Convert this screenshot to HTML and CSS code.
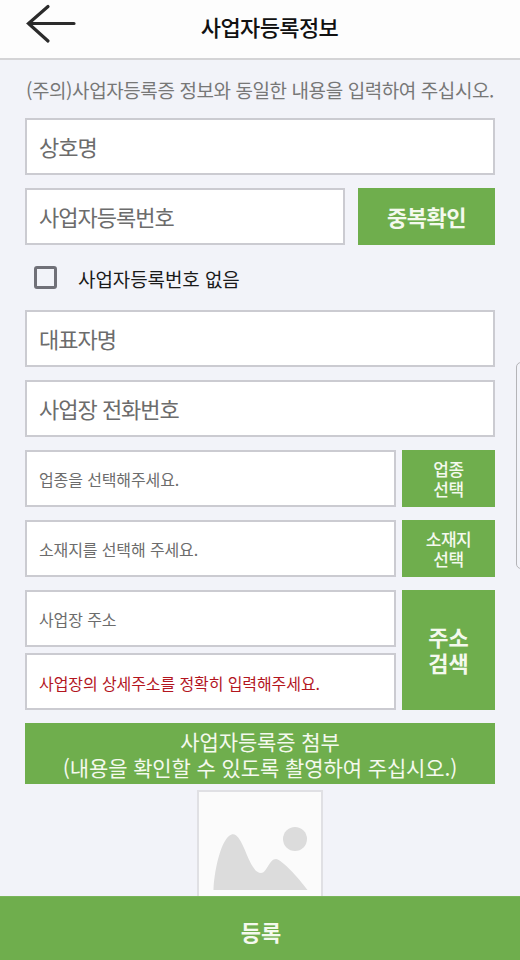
FILE: index.html
```html
<!DOCTYPE html>
<html lang="ko">
<head>
<meta charset="utf-8">
<title>사업자등록정보</title>
<link rel="stylesheet" href="styles.css">
</head>
<body>
<div class="page">
  <header class="header">
    <svg class="back" width="52" height="46" viewBox="0 0 52 46" aria-hidden="true"><path d="M49 23.500H3.500M23 6.500L3.500 23.500L23 41" fill="none" stroke="#2b2b2b" stroke-width="3.200" stroke-linecap="round" stroke-linejoin="miter"/></svg>
    <h1 class="title">사업자등록정보</h1>
  </header>
  <main class="form">
    <p class="notice">(주의)사업자등록증 정보와 동일한 내용을 입력하여 주십시오.</p>
    <div class="field large">상호명</div>
    <div class="row gap13">
      <div class="field large grow">사업자등록번호</div>
      <div class="btn dup">중복확인</div>
    </div>
    <label class="check"><span class="box"></span><span class="check-text">사업자등록번호 없음</span></label>
    <div class="field large">대표자명</div>
    <div class="field large">사업장 전화번호</div>
    <div class="row">
      <div class="field small grow">업종을 선택해주세요.</div>
      <div class="btn pick">업종<br>선택</div>
    </div>
    <div class="row">
      <div class="field small grow">소재지를 선택해 주세요.</div>
      <div class="btn pick">소재지<br>선택</div>
    </div>
    <div class="row addr">
      <div class="addr-fields">
        <div class="field small">사업장 주소</div>
        <div class="field small red">사업장의 상세주소를 정확히 입력해주세요.</div>
      </div>
      <div class="btn search">주소<br>검색</div>
    </div>
    <div class="banner">사업자등록증 첨부<br>(내용을 확인할 수 있도록 촬영하여 주십시오.)</div>
    <div class="photo">
      <svg width="100" height="78" viewBox="0 0 100 78" aria-hidden="true">
        <circle cx="85" cy="18" r="12" fill="#dcdcdc"/>
        <path d="M3.500 69C4 52 10 22 19 15C25 10 29 16 34 27C39 39 44 52 51 52C57 52 59 38 66 38C72 39 88 56 97.500 69Z" fill="#dcdcdc"/>
      </svg>
    </div>
  </main>
  <div class="scroll-handle"></div>
  <div class="submit">등록</div>
</div>
</body>
</html>
```

FILE: styles.css
```css
* { box-sizing: border-box; }
html, body { margin: 0; padding: 0; }
body {
  font-family: "Noto Sans CJK KR", "Noto Sans", sans-serif;
  background: #f2f3f9;
}
.page {
  position: relative;
  width: 520px;
  height: 960px;
  overflow: hidden;
  background: #f2f3f9;
}
.header {
  position: relative;
  height: 60px;
  background: #fdfdfd;
  border-bottom: 2px solid #d4d4d6;
  display: flex;
  align-items: center;
  justify-content: center;
}
.back { position: absolute; left: 25px; top: 0; }
.title {
  margin: 0 0 6px;
  padding-left: 19px;
  font-size: 22px;
  font-weight: 500;
  letter-spacing: -0.6px;
  color: #111;
}
.form {
  padding: 0 25px;
  display: flex;
  flex-direction: column;
}
.notice {
  margin: 16px 0 14px 1px;
  font-size: 19px;
  line-height: 28px;
  letter-spacing: -0.42px;
  color: #777;
  white-space: nowrap;
}
.field {
  background: #fff;
  border: 2px solid #cbcbd1;
  display: flex;
  align-items: center;
  padding-left: 12px;
  color: #6c6c6c;
  height: 57px;
  white-space: nowrap;
}
.large { font-size: 22px; letter-spacing: -1px; padding-bottom: 1px; }
.small { font-size: 16px; letter-spacing: -0.12px; }
.red { color: #b3161f; padding-top: 2px; letter-spacing: -0.09px; }
.grow { flex: 1; min-width: 0; }
.row { display: flex; gap: 6px; margin-top: 13px; }
.form > .field + .field { margin-top: 13px; }
.gap13 { gap: 13px; }
.btn {
  background: #6fae4d;
  color: #f4f9ee;
  display: flex;
  align-items: center;
  justify-content: center;
  text-align: center;
  font-weight: 500;
}
.dup { width: 137px; font-size: 22px; letter-spacing: -0.5px; font-weight: 700; padding-bottom: 2px; }
.pick { width: 93px; font-size: 17px; line-height: 20px; letter-spacing: -0.5px; padding-top: 1px; }
.check {
  display: flex;
  align-items: center;
  height: 65px;
  padding-left: 9px;
  gap: 21px;
}
.box {
  width: 23px;
  height: 23px;
  border: 3px solid #707078;
  border-radius: 3px;
  background: #f2f3f9;
}
.check-text { font-size: 19px; letter-spacing: -0.1px; color: #1a1a1a; margin-top: 1px; }
.addr { height: 120px; }
.addr-fields { flex: 1; display: flex; flex-direction: column; gap: 6px; }
.search { width: 93px; font-size: 22px; line-height: 26px; font-weight: 700; padding-bottom: 2px; }
.banner {
  margin-top: 13px;
  height: 61px;
  background: #6fae4d;
  color: #f4f9ee;
  text-align: center;
  font-size: 21px;
  line-height: 26px;
  letter-spacing: -0.1px;
  padding-top: 5px;
  overflow: hidden;
}
.photo {
  align-self: flex-start;
  margin: 6px 0 0 172px;
  width: 126px;
  height: 126px;
  background: #fbfbfb;
  border: 2px solid #e0e0e4;
  display: flex;
  justify-content: center;
  padding-top: 29px;
  padding-right: 1px;
}
.scroll-handle {
  position: absolute;
  right: -6px;
  top: 362px;
  width: 10px;
  height: 207px;
  border: 1px solid #b4b4b8;
  border-radius: 6px;
}
.submit {
  position: absolute;
  left: 0;
  right: 0;
  bottom: 0;
  height: 64px;
  background: #6fae4d;
  border-top: 1px solid #7ab55b;
  color: #f4f9ee;
  display: flex;
  align-items: center;
  justify-content: center;
  font-size: 22px;
  font-weight: 700;
  padding: 5px 0 0 2px;
}
```
